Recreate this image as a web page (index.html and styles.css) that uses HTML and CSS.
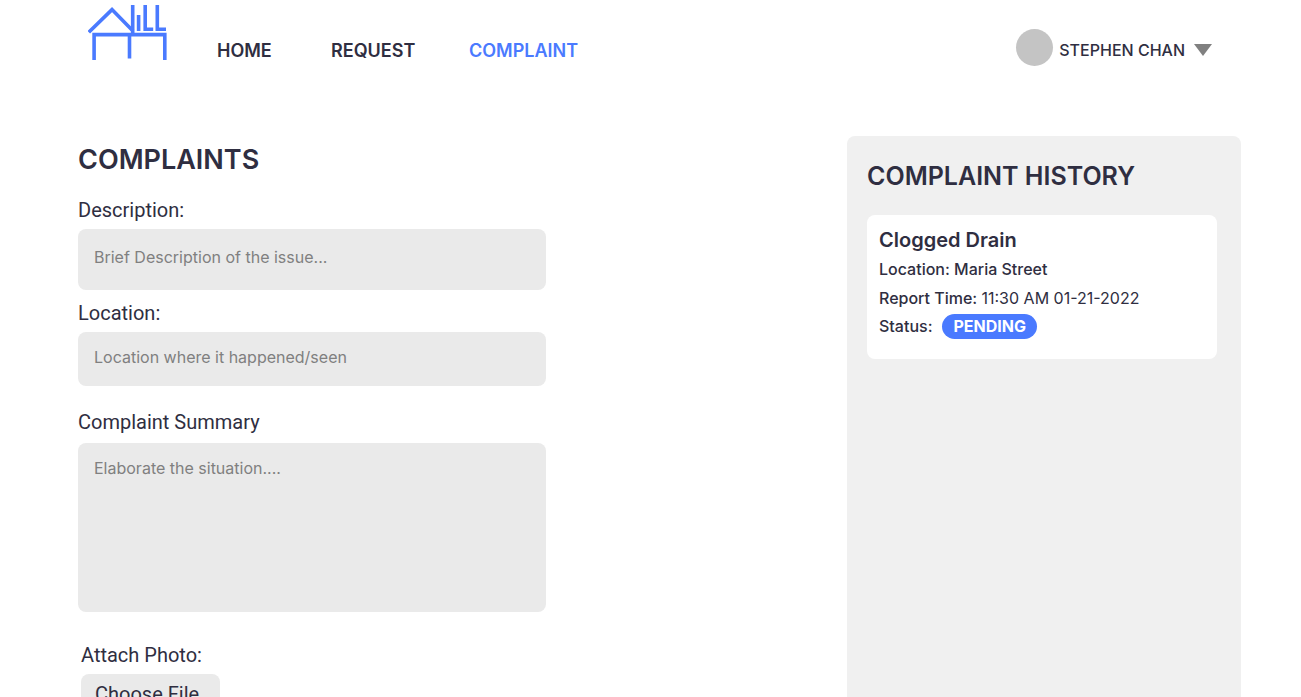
FILE: index.html
```html
<!DOCTYPE html>
<html lang="en">
<head>
<meta charset="utf-8">
<meta name="viewport" content="width=device-width, initial-scale=1">
<title>Complaints</title>
<link rel="stylesheet" href="styles.css">
</head>
<body>
<div class="page">
  <header class="header">
    <a class="logo" href="#" aria-label="Vill home">
      <svg width="80" height="56" viewBox="88 5 80 56" fill="none" stroke="#4a7aff" stroke-width="3.6">
        <path d="M88.8 32.2 112 9.6l21 21.4" />
        <path d="M132.7 5v28M138.6 15v16M145.2 5v24.3h8M157.3 5v24.3h8.7" />
        <path d="M94.1 60V34.6h70.7V60M129.5 34.6v23.8" />
      </svg>
    </a>
    <nav class="nav">
      <a class="nav-link" href="#">HOME</a>
      <a class="nav-link" href="#">REQUEST</a>
      <a class="nav-link nav-link-active" href="#" aria-current="page">COMPLAINT</a>
    </nav>
    <button class="account" type="button">
      <span class="avatar"></span>
      <span class="account-name">STEPHEN CHAN</span>
      <svg class="caret" width="18" height="12" viewBox="0 0 18 12" aria-hidden="true"><path d="M0 0h18L9 12z" fill="#808080"/></svg>
    </button>
  </header>
  <main class="main">
    <form class="form">
      <h1 class="title">COMPLAINTS</h1>
      <div class="field">
        <label class="label" for="description">Description:</label>
        <input class="control control-description" id="description" type="text" placeholder="Brief Description of the issue...">
      </div>
      <div class="field field-location">
        <label class="label" for="location">Location:</label>
        <input class="control control-location" id="location" type="text" placeholder="Location where it happened/seen">
      </div>
      <div class="field field-summary">
        <label class="label" for="summary">Complaint Summary</label>
        <textarea class="control control-summary" id="summary" placeholder="Elaborate the situation...."></textarea>
      </div>
      <div class="field field-photo">
        <label class="label" for="photo">Attach Photo:</label>
        <input class="file" id="photo" type="file" accept="image/*">
      </div>
    </form>
    <section class="history">
      <h2 class="history-title">COMPLAINT HISTORY</h2>
      <article class="card">
        <h3 class="card-title">Clogged Drain</h3>
        <p class="card-row">Location: Maria Street</p>
        <p class="card-row">Report Time: <span class="time">11:30 AM 01-21-2022</span></p>
        <p class="card-status">Status: <span class="badge">PENDING</span></p>
      </article>
    </section>
  </main>
</div>
</body>
</html>
```
FILE: styles.css
```css
* {
  box-sizing: border-box;
}

body {
  margin: 0;
  background: #fff;
  color: #2f2e41;
  font-family: Inter, "Liberation Sans", sans-serif;
}

h1, h2, h3, p {
  margin: 0;
}

.page {
  display: flex;
  flex-direction: column;
  height: 100vh;
  overflow: hidden auto;
  scrollbar-width: none;
}

.header {
  display: flex;
  flex-shrink: 0;
  align-items: flex-start;
  padding: 5px 89px 0 88px;
}

.logo svg {
  display: block;
}

.nav {
  display: grid;
  grid-template-columns: 114px 138px auto;
  margin: 34px 0 0 49px;
}

.nav-link {
  color: inherit;
  font-size: 18px;
  font-weight: 600;
  line-height: 24px;
  text-decoration: none;
}

.nav-link-active {
  color: #4a7aff;
}

.account {
  display: flex;
  align-items: center;
  margin: 24px 0 0 auto;
  padding: 0;
  border: 0;
  background: none;
  color: inherit;
  font: 500 16px/24px Inter, "Liberation Sans", sans-serif;
}

.avatar {
  width: 37px;
  height: 37px;
  margin-right: 6px;
  border-radius: 50%;
  background: #c4c4c4;
}

.account-name {
  padding-top: 4px;
}

.caret {
  margin: 4px 0 0 9px;
}

.main {
  display: grid;
  flex: 1 0 auto;
  grid-template-columns: 468fr 394fr;
  column-gap: 301px;
  padding: 70px 60px 0 78px;
}

.title {
  margin-top: 8px;
  font-size: 27px;
  font-weight: 600;
  line-height: 32px;
}

.field {
  display: flex;
  flex-direction: column;
  align-items: flex-start;
  gap: 7px;
  margin-top: 22px;
}

.field-location {
  margin-top: 11px;
}

.field-summary {
  gap: 9px;
  margin-top: 24px;
}

.field-photo {
  margin: 31px 0 40px;
  padding-left: 3px;
}

.label {
  font-family: Roboto, "Liberation Sans", sans-serif;
  font-size: 20px;
  line-height: 24px;
}

.control {
  display: block;
  width: 100%;
  margin: 0;
  padding: 0 16px;
  border: 0;
  border-radius: 8px;
  background: #eaeaea;
  color: inherit;
  font: 400 16px/20px Inter, "Liberation Sans", sans-serif;
  resize: none;
}

.control::placeholder {
  color: #808080;
  opacity: 1;
}

.control-description {
  height: 61px;
  padding-bottom: 5px;
}

.control-location {
  height: 54px;
  padding-bottom: 5px;
}

.control-summary {
  height: 169px;
  padding-top: 15px;
}

.file {
  width: 139px;
  overflow: hidden;
  color: transparent;
}

.file::file-selector-button {
  width: 139px;
  height: 40px;
  margin: 0;
  padding: 0 14px;
  border: 0;
  border-radius: 8px;
  background: #eaeaea;
  color: #2f2e41;
  font: 400 20px/24px Roboto, "Liberation Sans", sans-serif;
  text-align: left;
}

.history {
  padding: 24px 24px 24px 20px;
  border-radius: 8px 8px 0 0;
  background: #f0f0f0;
}

.history-title {
  font-size: 25px;
  font-weight: 600;
  line-height: 32px;
}

.card {
  margin-top: 23px;
  padding: 12px 12px 20px;
  border-radius: 8px;
  background: #fff;
  font-size: 16px;
  font-weight: 500;
}

.card-title {
  margin-bottom: 2px;
  font-size: 20px;
  font-weight: 600;
  line-height: 26px;
}

.card-row {
  line-height: 29px;
}

.time {
  font-weight: 400;
}

.card-status {
  display: flex;
  align-items: center;
  gap: 10px;
  padding-top: 1px;
  line-height: 25px;
}

.badge {
  padding: 0 11px;
  border-radius: 13px;
  background: #4a7aff;
  color: #fff;
  font-weight: 700;
}
```
